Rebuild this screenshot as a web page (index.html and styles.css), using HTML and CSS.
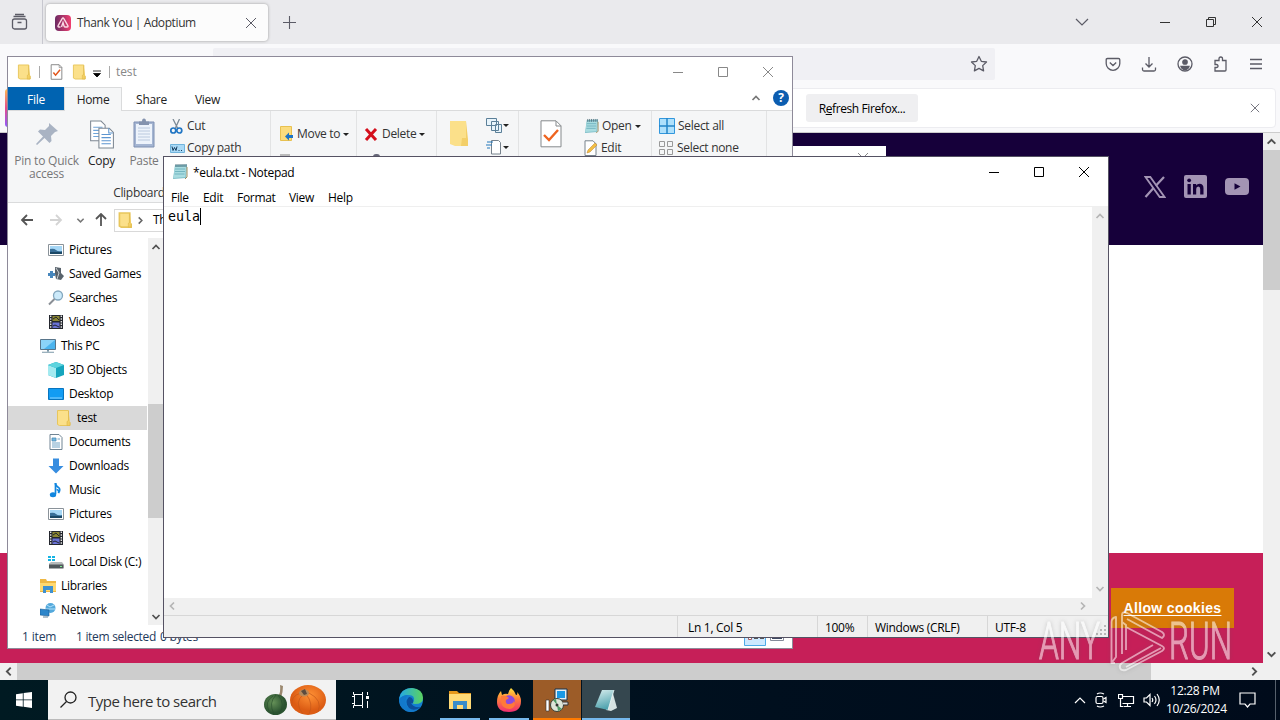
FILE: index.html
```html
<!DOCTYPE html>
<html lang="en">
<head>
<meta charset="utf-8">
<title>Desktop</title>
<link rel="stylesheet" href="styles.css">
</head>
<body>
<svg class="defs" aria-hidden="true">
  <symbol id="folder" viewBox="0 0 16 16"><path d="M1.5.5h11v11l1.5 1v3H3.500l-2-1z" fill="#fbe08a" stroke="#e8c65c"/><path d="M12.500 1v9.500l-1.500 1v4h3v-3.500" fill="#f3cf62" stroke="#ddb548" stroke-width=".6"/></symbol>
  <symbol id="check" viewBox="0 0 14 18"><path d="M1 .8h9l3 3v13.400H1z" fill="#fff" stroke="#7d7d7d"/><path d="M10 1v3h3" fill="none" stroke="#7d7d7d" stroke-width=".7"/><path d="M3.500 9.500l2.500 3 5-6" fill="none" stroke="#e2561b" stroke-width="1.700"/></symbol>
  <symbol id="close" viewBox="0 0 12 12"><path d="M1 1l10 10M11 1L1 11" fill="none" stroke="currentColor"/></symbol>
  <symbol id="box" viewBox="0 0 12 12"><path d="M1.500 1.500h9v9h-9z" fill="none" stroke="currentColor"/></symbol>
  <symbol id="dash" viewBox="0 0 12 12"><path d="M1 6.500h10" fill="none" stroke="currentColor"/></symbol>
  <symbol id="chev" viewBox="0 0 10 10"><path d="M1.500 7L5 3.500 8.500 7" fill="none" stroke="currentColor" stroke-width="1.700"/></symbol>
  <symbol id="pad" viewBox="0 0 16 17"><path d="M3 2l12-.5-.8 13.500L1 16z" fill="#7fbfc9"/><path d="M3 4l11-.5-.7 10.500L1.500 15z" fill="#a9dce0"/><path d="M3 6h10M3 8.500h10M2.500 11h10" stroke="#5aa3b2" stroke-width=".7"/><path d="M4 1v3M6 1v3M8 1v3M10 1v3M12 1v3M14 1v3" stroke="#54717c" stroke-width=".9"/><path d="M13 16l2-2V4" fill="none" stroke="#a08d5e"/></symbol>
  <symbol id="picture" viewBox="0 0 16 16"><path d="M.5 2.500h15v11H.5z" fill="#fff" stroke="#8a9299"/><path d="M2 4h12v8H2z" fill="#a6d7f6"/><path d="M2 7q4-1 6 1t6 1v3H2z" fill="#396f98"/><path d="M2 10h12v2H2z" fill="#1b4866"/></symbol>
  <symbol id="film" viewBox="0 0 16 16"><path d="M1 1h14v14H1z" fill="#24272e"/><path d="M4.500 2h7v5h-7z" fill="#8a8532"/><path d="M4.500 8.500h7V14h-7z" fill="#6a72d6"/><path d="M2.700 1.500V15M13.300 1.500V15" stroke="#eee" stroke-width="1.300" stroke-dasharray="1.500 1.200"/><path d="M5 5l3-2 3 3M5 12l2-1 4 2" stroke="#24272e" fill="none"/></symbol>
  <symbol id="monitor" viewBox="0 0 16 16"><path d="M.5 1.500h15v10H.5z" fill="#4cb4ee" stroke="#58758a"/><path d="M1 2h14L4 11H1z" fill="#8bd3f8"/><path d="M7 12h2v1.500H7zM2 13.800h12v1H2z" fill="#7b98a8"/></symbol>
  <symbol id="flagdoc" viewBox="0 0 24 28"><path d="M1.500 1h10l4 4v15h-14z" fill="#fff" stroke="#7d8792"/><path d="M4 7h9M4 10h9M4 13h9M4 16h9" stroke="#6fa4d8"/><path d="M9.500 8h10l4 4v15h-14z" fill="#fff" stroke="#7d8792"/><path d="M19 8v4.500h4M12 14h9M12 17h9M12 20h9M12 23h9" fill="none" stroke="#5c95d0"/></symbol>
</svg>
<div class="screen">

  <section class="browser">
    <header class="tabbar">
      <div class="view-btn"><svg width="18" height="18" viewBox="0 0 18 18" fill="none" stroke="#5b5b66" stroke-width="1.300"><rect x="1.500" y="6" width="14" height="10" rx="2"/><path d="M2.500 3.500h12M4 1.500h9M6.500 9.500h4"/></svg></div>
      <div class="tab"><svg width="16" height="16" viewBox="0 0 16 16"><defs><linearGradient id="ad" x2="1"><stop stop-color="#6b2a63"/><stop offset="1" stop-color="#f03f70"/></linearGradient></defs><rect width="16" height="16" rx="4" fill="url(#ad)"/><path d="M5.500 12H4q-1.500 0-.8-1.500L7 3.800q1-1.500 2 0l3.800 6.700q.7 1.500-.8 1.500H10.500q-1.200 0-1.500-1L8 7.500 6.500 12" fill="none" stroke="#fbdbe5" stroke-width="1.400"/></svg><span class="tab-title">Thank You | Adoptium</span><svg width="12" height="12" class="grey"><use href="#close"/></svg></div>
      <svg class="newtab" width="13" height="13" viewBox="0 0 13 13"><path d="M6.500 0v13M0 6.500h13" stroke="#5b5b66" stroke-width="1.100"/></svg>
      <div class="win-btns"><svg class="listtabs" width="14" height="8" viewBox="0 0 14 8"><path d="M1 1l6 6 6-6" fill="none" stroke="#5b5b66" stroke-width="1.200"/></svg><svg width="12" height="12"><use href="#dash"/></svg><svg width="12" height="12" viewBox="0 0 12 12" fill="none" stroke="currentColor"><path d="M1.500 3.500h7v7h-7zM3.500 3.500v-2h7v7h-2"/></svg><svg width="12" height="12"><use href="#close"/></svg></div>
    </header>
    <div class="navbar">
      <div class="urlbar"><svg width="18" height="18" viewBox="0 0 18 18" fill="none" stroke="#5b5b66" stroke-width="1.300" stroke-linejoin="round"><path d="M9 1.500l2.300 4.800 5.200.7-3.800 3.600.9 5.300L9 13.400l-4.600 2.500.9-5.300L1.500 7l5.200-.7z"/></svg></div>
      <div class="nav-icons">
        <svg width="16" height="16" viewBox="0 0 16 16"><path d="M2.500 2.500h11q1.300 0 1.300 1.300V7.500a6.800 6.800 0 0 1-13.600 0V3.800q0-1.300 1.300-1.300zM4.800 6.500L8 9.500l3.200-3"/></svg>
        <svg width="16" height="16" viewBox="0 0 16 16"><path d="M8 1v10M4.500 7.500L8 11l3.500-3.500M1.500 11.500v2q0 1.500 1.500 1.500h10q1.500 0 1.500-1.500v-2"/></svg>
        <svg width="16" height="16" viewBox="0 0 16 16"><circle cx="8" cy="8" r="7"/><path d="M4 10.500h8q-1 3-4 3t-4-3z" fill="#5b5b66"/><circle cx="8" cy="6" r="2.200" fill="#5b5b66"/></svg>
        <svg width="16" height="16" viewBox="0 0 16 16"><path d="M2 15V11.500h1.500q1.500 0 1.500-1.500T3.500 8.500H2V4.500h4V3q0-2 1.800-2T9.500 3v1.500H13V14q0 1-1 1z"/></svg>
        <svg width="14" height="14" viewBox="0 0 14 14"><path d="M1 2.500h12M1 7h12M1 11.500h12"/></svg>
      </div>
    </div>
    <div class="notice-wrap"><div class="notice"><button class="refresh">R<u>e</u>fresh Firefox...</button><svg width="10" height="10" class="grey"><use href="#close"/></svg></div></div>
    <div class="viewport">
      <div class="webpage">
        <div class="site-head">
          <svg width="22" height="22" viewBox="0 0 22 22" fill="none" stroke="#a394b4"><path d="M1.500 1h4.800l14.200 20h-4.800z" stroke-width="1.800"/><path d="M20 1l-8.200 8.800M9.500 12L1.500 21" stroke-width="2.200"/></svg>
          <svg width="23" height="23" viewBox="0 0 23 23"><rect width="23" height="23" rx="2" fill="#a394b4"/><path d="M3.500 9h3.300v10.500H3.500zM9 9h3.200v1.500q1-1.800 3.300-1.800 4 0 4 4.600v6.200h-3.300v-5.500q0-2.500-1.900-2.500-2.100 0-2.100 2.500v5.500H9z" fill="#16003a"/><circle cx="5.150" cy="5.300" r="1.900" fill="#16003a"/></svg>
          <svg width="24" height="17" viewBox="0 0 24 17"><rect width="24" height="17" rx="4" fill="#a394b4"/><path d="M9.500 5.300l6 3.200-6 3.300z" fill="#16003a"/></svg>
        </div>
        <div class="site-body"></div>
        <div class="cookies"><a class="allow">Allow cookies</a></div>
      </div>
      <div class="vscroll"><svg width="11" height="11"><use href="#chev"/></svg><div class="thumb"></div><svg class="down" width="11" height="11"><use href="#chev"/></svg></div>
    </div>
    <div class="hscroll"><svg class="left" width="11" height="11"><use href="#chev"/></svg><div class="hthumb"></div><svg class="right" width="11" height="11"><use href="#chev"/></svg></div>
    <div class="fox-edge"></div>
  </section>

  <section class="dialog"><svg width="12" height="12"><use href="#close"/></svg></section>

  <section class="explorer">
    <header class="ex-title">
      <svg width="15" height="16"><use href="#folder"/></svg><i class="bar"></i>
      <svg class="qcheck" width="13" height="16"><use href="#check"/></svg>
      <svg width="15" height="16"><use href="#folder"/></svg>
      <svg class="qdrop" width="8" height="8" viewBox="0 0 8 8"><path d="M0 1h8M.5 3.500h7L4 7z" stroke="#000" stroke-width=".8"/></svg><i class="bar b2"></i>
      <span class="ex-name">test</span>
      <div class="ex-btns"><svg width="12" height="12"><use href="#dash"/></svg><svg width="12" height="12"><use href="#box"/></svg><svg width="12" height="12"><use href="#close"/></svg></div>
    </header>
    <nav class="ex-tabs"><span class="file">File</span><span class="home">Home</span><span class="share">Share</span><span class="view">View</span><div class="ex-help"><svg width="10" height="10"><use href="#chev"/></svg><b>?</b></div></nav>
    <div class="ribbon">
      <div class="group g-clip">
        <div class="big pin"><svg width="24" height="24" viewBox="0 0 24 24"><path d="M14 1l9 8-3 1-4 4 .5 5-2 2-5-5L2 23l-1-1 7-7.500-5-5 2-2 5 .5 4-4z" fill="#a9b3c3"/></svg><span>Pin to Quick<br>access</span></div>
        <div class="big copy"><svg width="27" height="29"><use href="#flagdoc"/></svg><span>Copy</span></div>
        <div class="big paste"><svg width="22" height="30" viewBox="0 0 22 30"><path d="M1 4h20v25H1z" fill="#a4b5d2" stroke="#7f90b3"/><path d="M3 6h16v20H3z" fill="#edf3fb"/><path d="M5 10h12M5 13h12M5 16h12M5 19h12M5 22h12" stroke="#bac9de"/><path d="M6 3.500h3q0-3 2-3t2 3h3V7H6z" fill="#8493ae"/></svg><span>Paste</span></div>
        <div class="stack"><div class="cmd"><svg width="13" height="15" viewBox="0 0 13 15"><path d="M3 0l5 10M9.500 0L5 10" stroke="#7c8a96" stroke-width="1.300"/><circle cx="3.300" cy="11.500" r="2.500" fill="none" stroke="#2176c4" stroke-width="1.700"/><circle cx="9.300" cy="11.500" r="2.500" fill="none" stroke="#2176c4" stroke-width="1.700"/></svg><span>Cut</span></div><div class="cmd cpath"><svg width="15" height="9" viewBox="0 0 15 9"><path d="M.5.5h14v8H.5z" fill="#a9d9f6" stroke="#71b4dc"/><path d="M2 2.500l1 4 1.500-3 1.500 3 1-4M8.500 6.500h1M11 6.500h1" fill="none" stroke="#173e60"/></svg><span>Copy path</span></div></div>
        <div class="cap">Clipboard</div>
      </div>
      <div class="group g-move"><div class="cmd"><svg width="13" height="16" viewBox="0 0 13 16"><path d="M.5.500h11v14H.5z" fill="#fbdc7d" stroke="#e8c150"/><path d="M13 9H9V6.500l-4 4 4 4V12h4z" fill="#1c74c5"/></svg><span>Move to</span><i class="drop"></i></div><div class="sliver"></div></div>
      <div class="group g-del"><div class="cmd"><svg width="14" height="13" viewBox="0 0 14 13"><path d="M2 1l10 11M12 1L2 12" stroke="#d40f1c" stroke-width="3"/></svg><span>Delete</span><i class="drop"></i></div><div class="sliver dark"></div></div>
      <div class="group g-new"><svg width="20" height="28" viewBox="0 0 20 28"><path d="M1 1h16v17l2 1v7H6l-5-2z" fill="#fbe08a"/><path d="M17 1v17h-4l-1 8h7v-6.500z" fill="#f3cf69"/></svg><div class="newstack"><div><svg width="16" height="16" viewBox="0 0 16 16" fill="#e8f4fb" stroke="#5b7f98"><path d="M.5 1.500h10v7H.5zM5.500 4.500h7v9h-7zM9.500 7.500h6v8h-6z"/></svg><i class="drop"></i></div><div><svg width="16" height="16" viewBox="0 0 16 16"><path d="M5.500 1.500h7l2 2V15h-9z" fill="#fff" stroke="#77828c"/><path d="M1 3h6M0 6h6M1 9h3" stroke="#2478bc" stroke-width="1.200"/></svg><i class="drop"></i></div></div></div>
      <div class="group g-open"><svg class="props" width="22" height="28" viewBox="0 0 22 28"><path d="M1 .8h15l5 5v21H1z" fill="#fff" stroke="#85898c"/><path d="M16 1v5h5" fill="none" stroke="#85898c"/><path d="M4 15l5 5 9-10" fill="none" stroke="#ee6420" stroke-width="2.400"/></svg><div class="openstack"><div class="cmd"><svg width="15" height="16"><use href="#pad"/></svg><span>Open</span><i class="drop"></i></div><div class="cmd"><svg width="14" height="16" viewBox="0 0 14 16"><path d="M1 .8h8l3 3v11.700H1z" fill="#fff" stroke="#78838c"/><path d="M3 13l1-3 7-7 2 2-7 7z" fill="#f2be43" stroke="#bf832d" stroke-width=".5"/></svg><span>Edit</span></div></div></div>
      <div class="group g-sel"><div class="cmd"><svg width="16" height="16" viewBox="0 0 16 16"><path d="M.5.5h15v15H.5z" fill="#afe0fb" stroke="#3197dd"/><path d="M8 0v16M0 8h16" stroke="#2584c7" stroke-width="1.500"/></svg><span>Select all</span></div><div class="cmd"><svg width="15" height="15" viewBox="0 0 15 15" fill="none" stroke="#999"><path d="M.5.5h5v5h-5zM8.500.5h5v5h-5zM.5 8.500h5v5h-5zM8.500 8.500h5v5h-5z"/></svg><span>Select none</span></div></div>
    </div>
    <div class="address"><svg width="14" height="12" viewBox="0 0 14 12"><path d="M7 1L2 6l5 5M2 6h11" stroke="#555"/></svg><svg width="14" height="12" viewBox="0 0 14 12"><path d="M7 1l5 5-5 5M12 6H1" stroke="#d4d4d4"/></svg><svg class="recent" width="9" height="9"><use href="#chev"/></svg><svg width="12" height="14" viewBox="0 0 12 14"><path d="M1 6l5-5 5 5M6 1v12" stroke="#555"/></svg><div class="path"><svg width="15" height="16"><use href="#folder"/></svg><svg class="right crumb" width="9" height="9"><use href="#chev"/></svg><span>This PC</span></div></div>
    <div class="ex-body">
      <ul class="tree">
        <li><svg><use href="#picture"/></svg>Pictures</li>
        <li><svg viewBox="0 0 16 16"><path d="M7 1l6 1v5l3 3-3 4-5-1-1-5z" fill="#59636c"/><path d="M8 2l3 5-2 6" stroke="#cbd0d4" fill="none"/><path d="M0 7h2V5h3v2h2v3H5v2H2v-2H0z" fill="#4787bd"/></svg>Saved Games</li>
        <li><svg viewBox="0 0 16 16"><circle cx="10" cy="5.500" r="4.500" fill="#cceafa" stroke="#84a7be" stroke-width="1.300"/><path d="M6.500 9L1 14.500" stroke="#8a8f96" stroke-width="2"/></svg>Searches</li>
        <li><svg><use href="#film"/></svg>Videos</li>
        <li class="top"><svg><use href="#monitor"/></svg>This PC</li>
        <li><svg viewBox="0 0 16 16"><path d="M8 0l8 3v10l-8 3-8-3V3z" fill="#16a5bd"/><path d="M0 3l8 3v10l-8-3z" fill="#a3eaf0"/><path d="M8 0l8 3-8 3-8-3z" fill="#5dd4de"/></svg>3D Objects</li>
        <li><svg viewBox="0 0 16 16"><path d="M.5 2.500h15v11H.5z" fill="#129cf3" stroke="#0875bf"/><path d="M2 12h12" stroke="#8dd4ff"/></svg>Desktop</li>
        <li class="sub"><svg><use href="#folder"/></svg>test</li>
        <li><svg viewBox="0 0 16 16"><path d="M2 .5h9l3 3v12H2z" fill="#fff" stroke="#718594"/><path d="M4 4h4v3H4zM9.500 5H12M4 9h8M4 11h8M4 13h8" fill="#73b8df" stroke="#4d8eb8" stroke-width=".8"/></svg>Documents</li>
        <li><svg viewBox="0 0 16 16"><path d="M5 .5h6V8h4.500L8 15.500.5 8H5z" fill="#378de0"/></svg>Downloads</li>
        <li><svg viewBox="0 0 16 16"><path d="M7.500 1q0 3 3 4.500Q13 7 10.500 11q.8-3-2-3.500" fill="none" stroke="#1186df" stroke-width="1.700"/><path d="M7.500 1v11" stroke="#1186df" stroke-width="1.700"/><ellipse cx="5" cy="12.800" rx="3.200" ry="2.500" fill="#1186df"/></svg>Music</li>
        <li><svg><use href="#picture"/></svg>Pictures</li>
        <li><svg><use href="#film"/></svg>Videos</li>
        <li><svg viewBox="0 0 16 16"><path d="M0 2h3v2H0zM4 2h3v2H4zM0 5h3v2H0zM4 5h3v2H4z" fill="#15b4e4"/><path d="M1 9.500l2-1.500h11l1.500 2v4H1z" fill="#b5babb"/><path d="M1 10.500h14.500v4H1z" fill="#50575b"/><path d="M12 12.500h2" stroke="#7fea8f"/></svg>Local Disk (C:)</li>
        <li class="top"><svg viewBox="0 0 16 16"><path d="M0 1h6l1 2h9v11H0z" fill="#efb844"/><path d="M0 5h16v8H0z" fill="#ffd970"/><path d="M3 15V8h10v7h-3v-3H6v3z" fill="#3f91d0"/></svg>Libraries</li>
        <li class="top"><svg viewBox="0 0 16 16"><circle cx="10.500" cy="6" r="5" fill="#54a9dc"/><path d="M7 3l3 2 4-2M6 7h9" stroke="#b2e0f8" fill="none"/><path d="M0 7l9 1v6l-9-1z" fill="#2c85ca" stroke="#1a5d95" stroke-width=".6"/><path d="M3 15h5" stroke="#66849a"/></svg>Network</li>
      </ul>
      <div class="treescroll"><svg width="10" height="10"><use href="#chev"/></svg><div class="tthumb"></div><svg class="down" width="10" height="10"><use href="#chev"/></svg></div>
    </div>
    <footer class="ex-status"><span class="s1">1 item</span><span class="s2">1 item selected</span><span>0 bytes</span><div class="viewmode"><svg width="22" height="18" viewBox="0 0 22 18"><path d="M.5.500h21v17H.5z" fill="#cce8ff" stroke="#4dabe8"/><path d="M4.500 8.500h3v3h-3z" fill="#fff" stroke="#a35e63"/><path d="M10 10.500h4M16 10.500h4" stroke="#555"/></svg><svg width="15" height="13" viewBox="0 0 15 13"><path d="M.5.500h13v12H.5z" fill="#fff" stroke="#858b9a"/><path d="M2 10h10" stroke="#3e4962" stroke-width="2"/></svg></div></footer>
  </section>

  <section class="notepad">
    <header class="np-title"><svg width="16" height="17"><use href="#pad"/></svg><span>*eula.txt - Notepad</span><div class="np-btns"><svg width="12" height="12"><use href="#dash"/></svg><svg width="12" height="12"><use href="#box"/></svg><svg width="12" height="12"><use href="#close"/></svg></div></header>
    <nav class="np-menu"><span class="m1">File</span><span class="m2">Edit</span><span class="m3">Format</span><span class="m4">View</span><span>Help</span></nav>
    <div class="np-main"><div class="np-text">eula<i class="caret"></i></div><div class="np-vs"><svg width="10" height="10"><use href="#chev"/></svg><svg class="down" width="10" height="10"><use href="#chev"/></svg></div></div>
    <div class="np-hs"><svg class="left" width="10" height="10"><use href="#chev"/></svg><svg class="right" width="10" height="10"><use href="#chev"/></svg></div>
    <footer class="np-status"><span class="c1">Ln 1, Col 5</span><span class="c2">100%</span><span class="c3">Windows (CRLF)</span><span class="c4">UTF-8</span></footer>
    <svg class="grip" width="11" height="11" viewBox="0 0 11 11" fill="#b8b8b8"><path d="M8 0h2v2H8zM4 4h2v2H4zM8 4h2v2H8zM0 8h2v2H0zM4 8h2v2H4zM8 8h2v2H8z"/></svg>
  </section>

  <svg class="watermark" width="200" height="66" viewBox="0 0 200 66">
    <text x="1" y="49" textLength="61" lengthAdjust="spacingAndGlyphs">ANY</text>
    <text x="131" y="49" textLength="63" lengthAdjust="spacingAndGlyphs">RUN</text>
    <path d="M77 53H73.500V12q0-4 4.500-5v40L73.500 53M88 40V15L84 12V5q0-4 5-2l35 19q4 3 0 6L89 9M84 12V44M88 17L124 36q4 2 0 5L88 60q-5 1-6-2t2-5L115 35M88 57L123 38" fill="none" stroke="#fff" stroke-width="1.900" stroke-linejoin="round"/>
  </svg>

  <footer class="taskbar">
    <div class="start"><svg width="16" height="16" viewBox="0 0 16 16"><path d="M0 2.200L6.800 1.200v6.300H0zM7.600 1.100L16 0v7.500H7.600zM0 8.300h6.800v6.400L0 13.700zM7.600 8.300H16V16l-8.400-1.200z" fill="#fff"/></svg></div>
    <div class="search"><svg width="17" height="17" viewBox="0 0 17 17"><circle cx="10.500" cy="6.500" r="5.500" fill="none" stroke="#222" stroke-width="1.300"/><path d="M6.500 10.500L.5 16.500" stroke="#222" stroke-width="1.300"/></svg><span>Type here to search</span>
      <svg class="pumpkins" width="64" height="32" viewBox="0 0 64 32"><defs><radialGradient id="pk" cx=".55" cy=".35"><stop stop-color="#ff9236"/><stop offset="1" stop-color="#dc5c14"/></radialGradient><radialGradient id="gk" cx=".4" cy=".4"><stop stop-color="#659158"/><stop offset="1" stop-color="#2b5330"/></radialGradient></defs><path d="M15 13q3-5 2-12l3 1q0 6-2 12z" fill="#9b886f"/><ellipse cx="12.500" cy="20.500" rx="11.500" ry="10.500" fill="url(#gk)"/><path d="M13 11Q5 19 11 30M15 11q8 9 1 19M10 12Q1 18 6 27" fill="none" stroke="#264e2b" stroke-width=".6"/><ellipse cx="45" cy="16" rx="18" ry="15" fill="url(#pk)"/><path d="M41 10Q30 18 40 30M43 10q8 10 3 20M46 9q14 7 9 19M38 9q-11 3-9 13" fill="none" stroke="#c4571a" stroke-width=".7"/><ellipse cx="41" cy="9" rx="5" ry="3.500" fill="#b98a5a"/><path d="M38 7l4-2 2 5-3 1z" fill="#5d4b3e"/></svg></div>
    <div class="app"><svg width="18" height="16" viewBox="0 0 18 16" fill="none" stroke="#fff"><path d="M1.500 0v2.500h9V0M1.500 16v-2.500h9V16M2.500 2.500v11M10.500 2.500v11M0 4.500h2M0 11.500h2M15.500 0v3M15.500 9v7"/><path d="M14 4h3v3h-3z" fill="#fff" stroke="none"/></svg></div>
    <div class="app edge"><svg width="26" height="26" viewBox="0 0 26 26"><defs><linearGradient id="eg"><stop stop-color="#23a8e7"/><stop offset="1" stop-color="#5bd35f"/></linearGradient></defs><circle cx="13" cy="13" r="12" fill="#147fd1"/><path d="M1 12Q3 1 14 1q11 1 11 10 0 6-8 6-4 0-1-3 1-6-5-6-7 0-10 4z" fill="url(#eg)"/><path d="M10 8q-5 5-1 12 6 5 14-1-4 6-11 6Q2 23 1 13q3-5 9-5z" fill="#1379cb"/><path d="M11 10q-5 5 0 11 5 4 12-1-8 1-10-4 3 1 2-3-1-3-4-3z" fill="#0b4f9c"/></svg></div>
    <div class="app"><svg width="22" height="20" viewBox="0 0 22 20"><path d="M0 1h8l2 2h12v4H0z" fill="#e5981b"/><path d="M0 4h22v15H0z" fill="#ffda76"/><path d="M4 19v-8h14v8h-4v-4H8v4z" fill="#388cc9"/></svg><i class="run"></i></div>
    <div class="app"><svg width="24" height="25" viewBox="0 0 24 25"><defs><linearGradient id="ff" x2="0" y2="1"><stop stop-color="#ffe13b"/><stop offset=".45" stop-color="#ff813b"/><stop offset="1" stop-color="#ef2d72"/></linearGradient></defs><path d="M14 0q4 3 5 7 2 0 1-3 4 4 4 9 0 11-12 11T0 14Q0 7 4 3l1 4q3-2 6-1 1-4 3-6z" fill="url(#ff)"/><circle cx="12" cy="13" r="5.800" fill="#8d49dd"/><path d="M4 8q5-1 8 2l-3 2q-1 4 3 4t5-3q3 6-4 8-8 0-9-7z" fill="#ff7939"/></svg><i class="run"></i></div>
    <div class="app installer"><svg width="24" height="24" viewBox="0 0 24 24"><path d="M10 1h12v11H10z" fill="#e6eef2" stroke="#17324d"/><path d="M12 3h8v7h-8z" fill="#1999e5"/><path d="M1 12h3v11H1z" fill="#fff" stroke="#333" stroke-width=".6"/><circle cx="12" cy="17" r="6.500" fill="#dde5d8" stroke="#39413a"/><path d="M12 17l-4-5 3-1zM12 17l5 4-4 2z" fill="#4e9b66"/><circle cx="12" cy="17" r="1.500" fill="#333"/><path d="M18 14h5v3h-5" fill="#ddd" stroke="#333"/></svg><i class="run"></i></div>
    <div class="app active"><svg width="24" height="24" viewBox="0 0 24 24"><defs><linearGradient id="nb" x2=".3" y2="1"><stop stop-color="#d9eeee"/><stop offset="1" stop-color="#4fa3af"/></linearGradient></defs><path d="M18 2l5 18-6 3-5-1z" fill="#d6e2e2"/><path d="M8 2h12l-6 20L1 19z" fill="url(#nb)"/><path d="M20 2l-6 20" stroke="#eef7f7" stroke-width=".8"/></svg><i class="run"></i></div>
    <div class="tray">
      <svg width="12" height="8" viewBox="0 0 12 8"><path d="M1 7l5-5 5 5"/></svg>
      <svg width="12" height="16" viewBox="0 0 12 16"><rect x="1" y="4.500" width="7" height="7" rx="1.500"/><path d="M8.500 7l2.500-1.500v5L8.500 9M2 2q3-2 7 0M2 14q3 2 7 0"/></svg>
      <svg width="17" height="15" viewBox="0 0 17 15"><path d="M4.500 3.500h11v7h-11M9.500 10.500v3M6 13.500h7M.5 1.500h4v4h-4zM2.500 6v7.500h3"/></svg>
      <svg width="17" height="14" viewBox="0 0 17 14"><path d="M1 5h2.500L7 1.500v11L3.500 9H1zM9 5q1.500 2 0 4M11.500 3q3 4 0 8M14 1q4.500 6 0 12"/></svg>
      <div class="clock">12:28 PM<br>10/26/2024</div>
      <svg class="action" width="17" height="16" viewBox="0 0 17 16"><path d="M1 1h15v11h-5l-2.500 3-2.500-3H1z"/></svg>
      <i class="peek"></i>
    </div>
  </footer>
</div>
</body>
</html>
```
FILE: styles.css
```css
* { box-sizing: border-box; }
body { margin: 0; font: 12px/16px "Open Sans", "Noto Sans", sans-serif; letter-spacing: -.3px; color: #000; }
svg { display: block; flex: none; }
.defs { position: absolute; width: 0; height: 0; }
.screen { position: relative; width: 1280px; height: 720px; overflow: hidden; background: #fff; white-space: nowrap; }
.down { transform: rotate(180deg); }
.left { transform: rotate(-90deg); }
.right { transform: rotate(90deg); }
.grey { color: #5b5b66; }

.browser { position: relative; display: flex; flex-direction: column; height: 680px; background: #f9f9fb; }
.tabbar { display: flex; align-items: center; height: 44px; background: #eaeaed; }
.view-btn { display: flex; justify-content: flex-end; align-items: center; width: 43px; height: 44px; padding-right: 13px; border-right: 1px solid #c7c7cf; }
.tab { display: flex; align-items: center; width: 222px; height: 37px; margin-left: 3px; padding: 2px 11px 0 9px; background: #fcfcfc; border-radius: 4px; box-shadow: 0 0 3px #999; }
.tab-title { flex: 1; margin-left: 6px; color: #333; letter-spacing: -.4px; }
.newtab { margin: 1px 0 0 15px; }
.win-btns { display: flex; align-items: center; gap: 34px; margin-left: auto; padding-right: 17px; color: #333; }
.listtabs { margin-right: 36px; }
.navbar { display: flex; align-items: center; height: 41px; padding: 0 0 1px 213px; }
.urlbar { display: flex; justify-content: flex-end; align-items: center; width: 782px; height: 32px; padding-right: 7px; background: #f0f0f4; border-radius: 2px; }
.nav-icons { display: flex; align-items: center; gap: 20px; margin-left: auto; padding-right: 17px; fill: none; stroke: #5b5b66; stroke-width: 1.3; }
.notice-wrap { height: 48px; padding: 3px 4px 5px 5px; border-bottom: 1px solid #ccc; }
.notice { display: flex; justify-content: space-between; align-items: center; height: 40px; padding: 0 15px 0 800px; background: #fff; border: 1px solid #ececf0; border-radius: 4px; }
.refresh { width: 112px; height: 28px; padding: 2px 0 0; border: 0; border-radius: 3px; background: #efeff1; font: inherit; letter-spacing: -.4px; }
.fox-edge { position: absolute; left: 5px; top: 89px; width: 3px; height: 38px; border-radius: 3px 0 0 3px; background: linear-gradient(#ffbd4f, #e44a8c, #9059ff); }
.viewport { display: flex; height: 530px; }
.webpage { width: 1263px; display: flex; flex-direction: column; background: #fff; }
.site-head { display: flex; justify-content: flex-end; align-items: center; gap: 18px; height: 112px; padding: 0 14px 5px 0; background: #16003a; }
.site-body { flex: 1; }
.cookies { display: flex; justify-content: flex-end; height: 110px; padding: 35px 29px; background: #c61f58; }
.allow { width: 123px; height: 40px; background: #d97a07; color: #fff; font: bold 14px/40px "Liberation Sans", sans-serif; letter-spacing: .35px; text-align: center; text-decoration: underline; text-underline-offset: 2px; }
.vscroll { display: flex; flex-direction: column; align-items: center; width: 17px; padding: 3px 0; background: #f0f0f0; color: #505050; }
.thumb { width: 17px; height: 140px; margin: 3px 0 auto; background: #cdcdcd; }
.hscroll { display: flex; align-items: center; height: 17px; padding: 0 20px 0 3px; background: #f0f0f0; color: #505050; }
.hthumb { width: 1134px; height: 17px; margin: 0 auto 0 3px; background: #cdcdcd; }

.dialog { position: absolute; left: 780px; top: 146px; width: 106px; height: 60px; padding: 6px 0 0 77px; background: #fff; color: #888; }

.explorer { position: absolute; left: 7px; top: 56px; width: 786px; height: 593px; display: flex; flex-direction: column; border: 1px solid #8e8a99; background: #fff; }
.ex-title { display: flex; align-items: center; height: 30px; padding: 0 0 1px 9px; }
.bar { width: 1px; height: 12px; margin: 0 9px 0 7px; background: #aaa; }
.qcheck { margin: 0 9px 0 1px; }
.qdrop { margin: 4px 0 0 6px; }
.bar.b2 { margin: 0 6px 0 8px; }
.ex-name { color: #888; letter-spacing: -.1px; }
.ex-btns { display: flex; gap: 33px; margin-left: auto; padding-right: 17px; margin-right: 1px; color: #888; }
.ex-tabs { display: flex; height: 24px; line-height: 25px; border-bottom: 1px solid #dadbdc; text-align: center; letter-spacing: -.3px; color: #222; }
.file { width: 56px; background: #0063b1; color: #fff; }
.home { width: 58px; height: 24px; background: #f5f6f7; border: solid #dadbdc; border-width: 1px 1px 0; line-height: 23px; }
.share { width: 59px; }
.view { width: 53px; }
.ex-help { display: flex; align-items: center; gap: 12px; margin-left: auto; padding: 0 3px 1px 0; color: #777; }
.ex-help b { width: 16px; height: 16px; border-radius: 50%; background: #0c5db0; color: #fff; line-height: 16px; }
.ribbon { display: flex; height: 92px; background: #f5f6f7; border-bottom: 1px solid #dadbdc; color: #333; }
.group { display: flex; flex: none; border-right: 1px solid #e2e3e4; }
.cmd { display: flex; align-items: center; height: 22px; }
.cmd span { margin-left: 4px; }
.cpath span { margin-left: 2px; }
.drop { border: 3px solid transparent; border-top-color: #222; border-bottom: 0; margin-left: 3px; }
.g-clip { width: 263px; flex-wrap: wrap; align-content: flex-start; }
.big { display: flex; flex-direction: column; align-items: center; height: 72px; text-align: center; line-height: 13px; color: #777; }
.big span { margin-top: auto; height: 29px; }
.pin { width: 77px; padding-top: 11px; letter-spacing: -.2px; }
.copy { width: 33px; padding-top: 9px; color: #222; }
.paste { width: 52px; padding-top: 7px; }
.stack { padding-top: 4px; }
.cap { width: 262px; line-height: 20px; text-align: center; }
.g-move { width: 86px; padding: 12px 0 0 9px; flex-direction: column; }
.sliver { width: 10px; height: 3px; margin-top: 9px; background: #bbb; }
.sliver.dark { width: 7px; margin-left: 9px; background: #667; border-radius: 4px 4px 0 0; }
.g-del { width: 80px; padding: 12px 0 0 7px; flex-direction: column; }
.g-new { width: 82px; padding: 9px 0 0 12px; gap: 0 17px; }
.newstack div { display: flex; align-items: center; height: 22px; }
.newstack { margin-top: -6px; }
.newstack .drop { margin-left: 1px; }
.g-open { width: 133px; padding: 4px 0 0 21px; gap: 0 22px; }
.openstack .cmd span { margin-left: 3px; }
.props { margin-top: 5px; }
.g-sel { width: 115px; padding: 4px 0 0 7px; flex-direction: column; }
.g-sel .cmd span { margin-left: 3px; }
.address { display: flex; align-items: center; height: 35px; padding: 0 0 1px 12px; fill: none; stroke-width: 1.8; gap: 15px; }
.address .recent { transform: rotate(180deg); color: #777; margin: 0 -5px 0 -2px; }
.path { display: flex; align-items: center; gap: 3px; width: 500px; height: 23px; margin-left: -8px; padding-left: 3px; border: 1px solid #d9d9d9; }
.crumb { color: #666; }
.path span { margin-left: 5px; }
.ex-body { display: flex; height: 387px; }
.tree { width: 140px; margin: 0; padding: 0; list-style: none; }
.tree li { display: flex; align-items: center; gap: 5px; width: 139px; height: 24px; padding-left: 40px; }
.tree svg { width: 16px; height: 16px; }
.tree .top { padding-left: 32px; }
.tree .sub { padding-left: 48px; background: #d9d9d9; }
.treescroll { display: flex; flex-direction: column; align-items: center; width: 15px; padding: 4px 0 3px; background: #f0f0f0; color: #505050; }
.tthumb { width: 15px; height: 114px; margin: 152px 0 auto; background: #cdcdcd; }
.ex-status { display: flex; align-items: center; height: 23px; padding-left: 14px; color: #1e395b; }
.s1 { width: 54px; letter-spacing: -.15px; }
.s2 { width: 84px; }
.viewmode { display: flex; gap: 4px; margin-left: auto; padding-right: 7px; }

.notepad { position: absolute; left: 163px; top: 156px; width: 946px; height: 482px; display: flex; flex-direction: column; border: 1px solid #555263; background: #fff; }
.np-title { display: flex; align-items: center; height: 29px; padding-left: 8px; gap: 5px; }
.np-title span { padding-top: 2px; }
.np-btns { display: flex; gap: 33px; margin-left: auto; padding-right: 18px; }
.np-menu { display: flex; align-items: center; height: 20px; padding: 3px 0 0 7px; }
.m1 { width: 32px; }
.m2 { width: 34px; }
.m3 { width: 52px; }
.m4 { width: 39px; }
.np-main { display: flex; height: 392px; border-top: 1px solid #efefef; }
.np-text { flex: 1; display: flex; padding: 1px 0 0 4px; font: 13.3px/18px "DejaVu Sans Mono", "Liberation Mono", monospace; letter-spacing: 0; }
.caret { width: 1px; height: 17px; background: #000; }
.np-vs { display: flex; flex-direction: column; justify-content: space-between; align-items: center; width: 16px; padding: 4px 0; background: #f0f0f0; color: #b5b5b5; }
.np-hs { display: flex; justify-content: space-between; align-items: center; height: 17px; padding: 0 20px 2px 3px; background: #f0f0f0; color: #b5b5b5; }
.np-status { display: flex; justify-content: flex-end; height: 22px; background: #f0f0f0; border-top: 1px solid #d7d7d7; line-height: 23px; }
.np-status span { border-left: 1px solid #d7d7d7; padding-left: 7px; }
.c1 { width: 140px; }
.np-status .c1 { padding-left: 10px; }
.c2 { width: 50px; }
.c3 { width: 120px; }
.c4 { width: 121px; }
.grip { position: absolute; right: 1px; bottom: 1px; }

.watermark { position: absolute; left: 1038px; top: 610px; opacity: .55; z-index: 3; filter: drop-shadow(0 0 2px rgba(90, 90, 90, .5)); }
.watermark text { font: 300 51px Roboto, sans-serif; letter-spacing: 0; fill: #fff; stroke: #fff; stroke-width: 1.2; }

.taskbar { display: flex; height: 40px; background: linear-gradient(90deg, #001a22, #000f1e 60%, #000b1b); color: #fff; }
.start { width: 48px; display: flex; align-items: center; justify-content: center; }
.search { display: flex; align-items: center; width: 288px; padding-left: 12px; background: #f2f2f2; border-bottom: 1px solid #bbb; color: #333; font-size: 15px; letter-spacing: -.5px; }
.search span { margin-left: 11px; padding-top: 2px; }
.pumpkins { margin: 0 9px 0 auto; }
.app { position: relative; display: flex; align-items: center; justify-content: center; width: 49px; flex: none; }
.edge { width: 51px; margin-right: -1px; }
.run { position: absolute; left: 5px; right: 4px; bottom: 0; height: 2px; background: #76b9ed; }
.installer { width: 48px; background: #9c5c28; }
.installer .run, .active .run { left: 0; right: 0; }
.installer .run { background: #ff7a00; }
.active { width: 48px; margin-left: 1px; background: #35474f; }
.tray { display: flex; align-items: center; gap: 9px; margin-left: auto; padding-right: 4px; fill: none; stroke: #fff; stroke-width: 1.2; }
.tray svg:nth-child(3) { margin-left: 2px; }
.tray svg:nth-child(4) { margin-left: -1px; }
.clock { width: 58px; margin: 0 4px 0 -3px; text-align: center; line-height: 18px; }
.action { margin-left: 2px; }
.peek { width: 1px; height: 40px; margin-left: 10px; background: #56606c; }
```
